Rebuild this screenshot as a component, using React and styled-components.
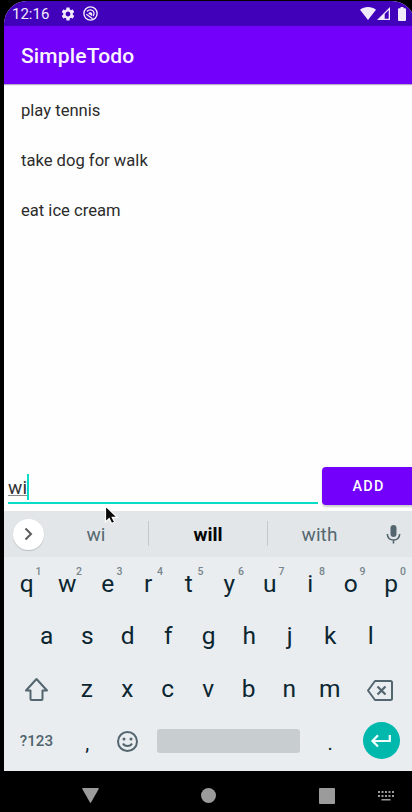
import React from "react";
import styled, { createGlobalStyle } from "styled-components";

const GlobalStyle = createGlobalStyle`
  * { box-sizing: border-box; }
  html, body { margin: 0; background: #000; overflow: hidden; }
  body { font-family: Roboto, sans-serif; }
`;

const Device = styled.div`
  width: 412px;
  height: 812px;
  padding: 1px 0 0 4px;
  overflow: hidden;
  background: #000;
`;

const Screen = styled.div`
  position: relative;
  width: 411px;
  height: 770px;
  display: flex;
  flex-direction: column;
  overflow: hidden;
  border-radius: 23px 23px 0 0;
  background: #fefefe;
`;

const StatusBar = styled.header`
  flex: none;
  height: 25px;
  padding: 0 9px 0 8px;
  display: flex;
  align-items: center;
  background: #4100ba;
  color: #f1eafb;
`;

const Clock = styled.span`
  width: 48px;
  padding-top: 1px;
  font-size: 15px;
  line-height: 24px;
`;

const StatusIcon = styled.svg`
  display: block;
  flex: none;
  width: ${(p) => p.$w}px;
  height: ${(p) => p.$h}px;
  margin-left: ${(p) => p.$gap || 0}px;
`;

const Spacer = styled.div`
  flex: 1;
`;

const AppBar = styled.div`
  flex: none;
  height: 58px;
  padding: 2px 17px 0;
  display: flex;
  align-items: center;
  background: #7200fa;
  color: #fbf5ff;
  box-shadow: 0 1px 1px #b9aac9;
`;

const Title = styled.h1`
  margin: 0;
  font-size: 21px;
  line-height: 24px;
  font-weight: 500;
  letter-spacing: 0.15px;
`;

const TodoList = styled.ul`
  flex: 1;
  margin: 0;
  padding: 1px 17px 0;
  list-style: none;
`;

const TodoItem = styled.li`
  height: 50px;
  line-height: 51px;
  font-size: 16.6px;
  color: #2c2c2c;
`;

const Composer = styled.form`
  flex: none;
  height: 44px;
  padding-left: 4px;
  display: flex;
  align-items: flex-start;
  gap: 4px;
`;

const Field = styled.div`
  width: 310px;
  height: 37px;
  display: flex;
  align-items: flex-start;
  padding-top: 7px;
  border-bottom: 2px solid #06dcc6;
`;

const Typed = styled.span`
  height: 22px;
  line-height: 27px;
  font-size: 19px;
  letter-spacing: 0.1px;
  color: #333;
  border-bottom: 1.5px solid #888;
`;

const Caret = styled.span`
  width: 2px;
  height: 26px;
  background: #06dcc6;
`;

const AddButton = styled.button`
  width: 93px;
  height: 38px;
  padding: 1px 0 0;
  border: 0;
  border-radius: 4px;
  background: #7200fa;
  color: #fff;
  font: 500 14.4px Roboto, sans-serif;
  letter-spacing: 1.25px;
  box-shadow: 0 2px 2px #ccc;
`;

const Suggestions = styled.div`
  flex: none;
  height: 46px;
  padding: 0 14px 0 9px;
  display: flex;
  align-items: center;
  background: #e2e6e9;
`;

const Expand = styled.div`
  width: 31px;
  height: 31px;
  display: grid;
  place-items: center;
  border-radius: 50%;
  background: #fff;
  box-shadow: 0 1px 1px #b9bec1;
`;

const Suggestion = styled.div`
  width: ${(p) => p.$w}px;
  text-align: center;
  font-size: 19px;
  letter-spacing: ${(p) => (p.$strong ? 0 : 0.1)}px;
  font-weight: ${(p) => (p.$strong ? 700 : 400)};
  color: ${(p) => (p.$strong ? "#050505" : "#566870")};
`;

const Divider = styled.div`
  width: 1px;
  height: 25px;
  margin-top: -2px;
  background: #c3c9cd;
`;

const Keyboard = styled.div`
  flex: none;
  height: 214px;
  padding-left: 2.5px;
  background: #e9edf0;
`;

const KeyRow = styled.div`
  height: 52.6px;
  padding-left: ${(p) => p.$indent || 0}px;
  display: flex;
`;

const Key = styled.div`
  position: relative;
  width: ${(p) => p.$w || 40.5}px;
  height: 52.6px;
  display: flex;
  align-items: center;
  justify-content: center;
  font-size: 24.5px;
  color: #0b2630;
`;

const ActionKey = styled(Key)`
  width: 60px;
  padding-top: ${(p) => p.$drop || 0}px;
`;

const PunctuationKey = styled(Key)`
  font-size: 20px;
  padding: 3px 0 0 1px;
`;

const Hint = styled.sup`
  position: absolute;
  top: 9px;
  left: 29px;
  line-height: 12px;
  font-size: 10.5px;
  font-weight: 500;
  color: #78858b;
`;

const ModeKey = styled(Key)`
  font-size: 15.2px;
  font-weight: 500;
  color: #50636c;
`;

const SpaceBar = styled.div`
  width: 143px;
  height: 24px;
  border-radius: 3px;
  background: #c8cdd0;
`;

const Enter = styled.div`
  flex: none;
  width: 37px;
  height: 37px;
  margin: -1px 0 0 1px;
  display: grid;
  place-items: center;
  border-radius: 50%;
  background: #01b8ac;
`;

const Glyph = styled.svg`
  display: block;
  flex: none;
  overflow: visible;
`;

const NavBar = styled.nav`
  height: 41px;
  padding: 8px 0 0 78px;
  display: flex;
  align-items: center;
  color: #9b9b9b;
`;

const NavIcon = styled.svg`
  display: block;
  flex: none;
  margin-right: ${(p) => p.$gap || 0}px;
`;

const Pointer = styled.svg`
  position: absolute;
  left: 100px;
  top: 505px;
`;

const topRow = "qwertyuiop".split("");
const middleRow = "asdfghjkl".split("");
const bottomRow = "zxcvbnm".split("");
const todos = ["play tennis", "take dog for walk", "eat ice cream"];
const dots = [0, 1, 2, 3, 4];
const slate = "#53666f";

export default function App() {
  return (
    <Device>
      <GlobalStyle />
      <Screen>
        <StatusBar>
          <Clock>12:16</Clock>
          <StatusIcon $w={16} $h={16} viewBox="0 0 24 24" fill="currentColor">
            <path
              fillRule="evenodd"
              d="M19.140 12.940c.04-.3.060-.61.060-.94 0-.32-.02-.64-.07-.94l2.030-1.580c.18-.14.230-.41.120-.61l-1.920-3.320c-.12-.22-.37-.29-.59-.22l-2.390.960c-.5-.38-1.030-.7-1.620-.94l-.36-2.540c-.04-.24-.24-.41-.48-.41h-3.840c-.24 0-.43.170-.47.410l-.36 2.540c-.59.240-1.130.570-1.620.940l-2.390-.96c-.22-.08-.47 0-.59.220L2.740 8.870c-.12.210-.08.470.120.610l2.030 1.580c-.05.300-.09.630-.09.940s.020.640.070.940l-2.030 1.580c-.18.140-.23.410-.12.610l1.920 3.320c.12.220.370.290.590.220l2.390-.96c.5.380 1.030.700 1.620.940l.36 2.540c.05.240.240.410.480.410h3.840c.24 0 .440-.17.470-.41l.36-2.540c.59-.24 1.130-.56 1.620-.94l2.390.960c.22.080.470 0 .590-.22l1.920-3.320c.12-.22.070-.47-.12-.61l-2.010-1.580zM12 15.600c-1.980 0-3.600-1.620-3.600-3.600s1.620-3.600 3.600-3.600 3.600 1.620 3.600 3.600-1.620 3.600-3.600 3.600z"
            />
          </StatusIcon>
          <StatusIcon $w={15} $h={15} $gap={7} viewBox="0 0 15 15" fill="none" stroke="currentColor">
            <circle cx="7.500" cy="7.500" r="6.600" strokeWidth="1.400" />
            <path d="M4 5.500C5.800 3.100 9.700 3.200 10.800 6c.6 1.600.2 3-.6 4.100" strokeWidth="1.300" />
            <path d="M3.300 8.200l6.300 4.600" strokeWidth="1.300" />
            <path d="M5.300 8c.2-2.300 3.600-2.500 4 .2l-.3 2.100-1.800-1.500z" fill="currentColor" stroke="none" />
          </StatusIcon>
          <Spacer />
          <StatusIcon $w={16} $h={13} viewBox="0 0 16 13" fill="currentColor">
            <path d="M0 2.700C4.500-.8 11.500-.8 16 2.700L8 13z" />
          </StatusIcon>
          <StatusIcon $w={13} $h={13} $gap={1} viewBox="0 0 13 13">
            <path d="M0 13 13 0v13z" fill="currentColor" />
            <path d="M7.700 7 11.700 3v8.700h-4z" fill="#4100ba" />
          </StatusIcon>
          <StatusIcon $w={8} $h={14} $gap={8} viewBox="0 0 8 14" fill="currentColor">
            <path d="M2.500 0h3v1.300H7q1 0 1 1V13q0 1-1 1H1q-1 0-1-1V2.300q0-1 1-1h1.500z" />
          </StatusIcon>
        </StatusBar>
        <AppBar>
          <Title>SimpleTodo</Title>
        </AppBar>
        <TodoList>
          {todos.map((todo) => (
            <TodoItem key={todo}>{todo}</TodoItem>
          ))}
        </TodoList>
        <Composer>
          <Field>
            <Typed>wi</Typed>
            <Caret />
          </Field>
          <AddButton type="button">ADD</AddButton>
        </Composer>
        <Suggestions>
          <Expand>
            <Glyph width="8" height="12" viewBox="0 0 8 12" fill="none" stroke="#5c5c5c" strokeWidth="2">
              <path d="M.5.500l5.500 5.500L.5 11.500" />
            </Glyph>
          </Expand>
          <Suggestion $w={104}>wi</Suggestion>
          <Divider />
          <Suggestion $w={118} $strong>will</Suggestion>
          <Divider />
          <Suggestion $w={103}>with</Suggestion>
          <Spacer />
          <Glyph width="14" height="19" viewBox="0 0 14 19" fill="none" stroke={slate} strokeWidth="1.600">
            <rect x="3.500" y="0" width="6" height="12" rx="3" fill={slate} stroke="none" />
            <path d="M.3 9c.3 4 2.800 6 6.200 6s5.900-2 6.200-6M6.500 15v3.500" />
          </Glyph>
        </Suggestions>
        <Keyboard>
          <KeyRow>
            {topRow.map((letter, i) => (
              <Key key={letter}>
                {letter}
                <Hint>{(i + 1) % 10}</Hint>
              </Key>
            ))}
          </KeyRow>
          <KeyRow $indent={20}>
            {middleRow.map((letter) => (
              <Key key={letter}>{letter}</Key>
            ))}
          </KeyRow>
          <KeyRow>
            <ActionKey $drop={2}>
              <Glyph width="24" height="23" viewBox="0 0 24 23" fill="none" stroke={slate} strokeWidth="2" strokeLinejoin="round">
                <path d="M11.500 1 1 12.500h4.500V21q0 1 1 1h10q1 0 1-1v-8.500H22z" />
              </Glyph>
            </ActionKey>
            {bottomRow.map((letter) => (
              <Key key={letter}>{letter}</Key>
            ))}
            <ActionKey $drop={4}>
              <Glyph width="26" height="21" viewBox="0 0 26 21" fill="none" stroke={slate} strokeWidth="2" strokeLinejoin="round">
                <path d="M8 1h15.500q1.500 0 1.500 1.500v16q0 1.500-1.500 1.500H8L1 10.500z" />
                <path d="m10.500 6.500 8 8m0-8-8 8" strokeWidth="2.200" />
              </Glyph>
            </ActionKey>
          </KeyRow>
          <KeyRow>
            <ModeKey $w={60}>?123</ModeKey>
            <PunctuationKey>,</PunctuationKey>
            <Key>
              <Glyph width="21" height="21" viewBox="0 0 21 21" fill="none" stroke={slate} strokeWidth="2">
                <circle cx="10.500" cy="10.500" r="9.500" />
                <path d="M6 12.500c1.500 3.300 7.500 3.300 9 0" />
                <circle cx="7" cy="8" r="1.500" fill={slate} stroke="none" />
                <circle cx="14" cy="8" r="1.500" fill={slate} stroke="none" />
              </Glyph>
            </Key>
            <Key $w={162}>
              <SpaceBar />
            </Key>
            <PunctuationKey>.</PunctuationKey>
            <Key $w={61}>
              <Enter>
                <Glyph width="20" height="13" viewBox="0 0 20 13" fill="none" stroke="#f2ffff" strokeWidth="2.200">
                  <path d="M18.800 1v6H2M7 1.200 1.500 7 7 12.500" />
                </Glyph>
              </Enter>
            </Key>
          </KeyRow>
        </Keyboard>
        <Pointer width="16" height="20" viewBox="0 0 16 20">
          <path d="M1.500 0v16l3.700-3.500 2.400 5 3-1.500-2.400-4.700h5z" fill="#080808" stroke="#fff" strokeWidth="1.200" />
        </Pointer>
      </Screen>
      <NavBar>
        <NavIcon $gap={102} width="17" height="15" viewBox="0 0 17 15" fill="currentColor">
          <path d="M.8 0h15.400q.8.200.5 1L9 14.500q-.5.800-1 0L.3 1Q0 .2.800 0z" />
        </NavIcon>
        <NavIcon $gap={103} width="15" height="15" viewBox="0 0 15 15" fill="currentColor">
          <circle cx="7.500" cy="7.500" r="7.500" />
        </NavIcon>
        <NavIcon $gap={43} width="16" height="16" viewBox="0 0 16 16" fill="currentColor">
          <rect width="16" height="16" rx="1" />
        </NavIcon>
        <NavIcon width="16" height="10" viewBox="0 0 16 10" fill="currentColor">
          {dots.map((i) => (
            <path key={i} d={`M${i * 3.5} 0h2v2h-2zm0 4h2v2h-2z`} />
          ))}
          <rect x="3.500" y="8" width="9" height="1.500" />
        </NavIcon>
      </NavBar>
    </Device>
  );
}
